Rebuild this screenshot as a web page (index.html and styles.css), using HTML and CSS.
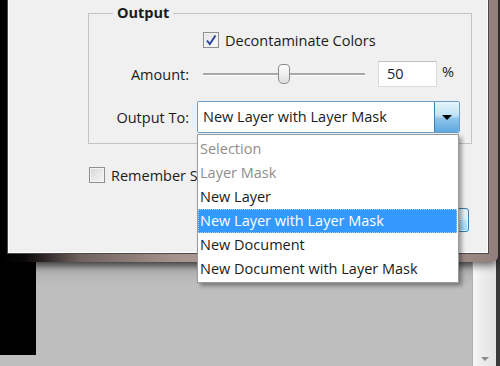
FILE: index.html
```html
<!DOCTYPE html>
<html lang="en">
<head>
  <meta charset="UTF-8">
  <title>Refine Mask - Output</title>
  <link rel="stylesheet" href="styles.css">
</head>
<body>

  <div class="desktop">
    <div class="dark-panel"></div>
    <div class="canvas"></div>
    <div class="scrollbar"><span class="scroll-arrow"></span></div>
  </div>

  <div class="window">
    <div class="client">
      <fieldset class="group">
        <legend>Output</legend>

        <div class="row row-check">
          <span class="label"></span>
          <label class="check">
            <span class="box checked">
              <svg width="12" height="12" viewBox="0 0 12 12"><path d="M2 6.5 L4.8 10 L10.5 1.5" fill="none" stroke="#33489a" stroke-width="2"/></svg>
            </span>
            Decontaminate Colors
          </label>
        </div>

        <div class="row row-amount">
          <span class="label">Amount:</span>
          <div class="amount">
            <div class="slider"><span class="thumb"></span></div>
            <div class="field">50</div>
            <span class="unit">%</span>
          </div>
        </div>

        <div class="row row-output">
          <span class="label">Output To:</span>
          <div class="select">
            <span class="select-value">New Layer with Layer Mask</span>
            <span class="select-btn"><span class="tri"></span></span>
          </div>
        </div>
      </fieldset>

      <label class="check remember">
        <span class="box"></span>
        <span class="remember-text">Remember Settings</span>
      </label>

      <div class="btn-row">
        <button class="btn-ok">OK</button>
      </div>
    </div>
  </div>

  <ul class="dropdown">
    <li class="disabled">Selection</li>
    <li class="disabled">Layer Mask</li>
    <li>New Layer</li>
    <li class="active">New Layer with Layer Mask</li>
    <li>New Document</li>
    <li>New Document with Layer Mask</li>
  </ul>

</body>
</html>
```

FILE: styles.css
```css
body {
  margin: 0;
  width: 500px;
  height: 366px;
  overflow: hidden;
  position: relative;
  font-family: "Open Sans", "Noto Sans", sans-serif;
  font-size: 14.5px;
  color: #1b1b1b;
  background: #bebebe;
}
.desktop {
  display: flex;
  height: 366px;
}
.dark-panel {
  width: 36px;
  height: 355px;
  background: #000;
}
.canvas {
  flex: 1;
  background: linear-gradient(#8c8c8c 262px, #b0b0b0 270px, #bebebe 285px);
}
.scrollbar {
  width: 23px;
  border-left: 1px solid #b0b0b0;
  border-right: 4px solid #3a3a3a;
  background: linear-gradient(to right, #f8f8f8, #ececec 40%, #e4e4e4);
  position: relative;
}
.scroll-arrow {
  position: absolute;
  left: 8px;
  bottom: 5px;
  border-left: 4px solid transparent;
  border-right: 4px solid transparent;
  border-top: 4px solid #8a8a8a;
}

/* dialog window */
.window {
  position: absolute;
  left: 0;
  top: -12px;
  width: 498px;
  height: 274px;
  border-radius: 0 0 6px 6px;
  background: linear-gradient(to right, #000 0, #0a0808 25px, #6f625f 80px, #a8948f 180px, #b3a29e 380px, #927f7b 100%);
  box-shadow: 0 3px 8px rgba(0, 0, 0, 0.6);
}
.client {
  margin: 12px 10px 0 8px;
  height: 253px;
  box-sizing: border-box;
  padding: 4px 16px 0 80px;
  background: #f0f0f0;
  border: 1px solid #fdfdfd;
  border-top: none;
  box-shadow: 0 0 0 1px #4a4a4a;
}
.group {
  margin: 0 0 0 -1px;
  padding: 0 0 10px 0;
  border: 1px solid #c3c3c3;
  width: 384px;
  box-sizing: border-box;
}
.group legend {
  margin-left: 24px;
  padding: 0 4px;
  font-weight: bold;
  line-height: 18px;
}
.row {
  display: flex;
  align-items: center;
  gap: 8px;
}
.row .label {
  width: 100px;
  text-align: right;
}
.row-check {
  margin-top: 6px;
  height: 24px;
}
.row-amount {
  margin-top: 8px;
  height: 28px;
}
.row-output {
  margin-top: 13px;
  height: 32px;
}

.check {
  display: flex;
  align-items: center;
  gap: 6px;
}
.row-check .check {
  margin-left: 6px;
}
.box {
  flex: none;
  width: 14px;
  height: 14px;
  border: 1px solid #8e8f8f;
  background: linear-gradient(135deg, #d8d8d8, #f6f6f6);
  box-shadow: inset 0 0 0 1px #f4f4f4;
  display: flex;
  align-items: center;
  justify-content: center;
}
.box.checked {
  background: linear-gradient(135deg, #e2e2e2, #fbfbfb);
}

.amount {
  display: flex;
  align-items: center;
  margin-left: 6px;
}
.slider {
  position: relative;
  width: 162px;
  height: 2px;
  background: #a8a8a8;
  border-bottom: 1px solid #fff;
}
.thumb {
  position: absolute;
  left: 75px;
  top: -9px;
  width: 10px;
  height: 18px;
  border: 1px solid #8c8c8c;
  border-radius: 4px 4px 5px 5px;
  background: linear-gradient(#fdfdfd, #dedede);
}
.field {
  margin-left: 13px;
  width: 59px;
  height: 26px;
  box-sizing: border-box;
  padding-left: 8px;
  line-height: 24px;
  background: #fff;
  border: 1px solid #dadada;
  border-top-color: #c2c2c2;
}
.unit {
  margin-left: 5px;
  margin-top: -6px;
}

.select {
  width: 263px;
  height: 32px;
  box-sizing: border-box;
  display: flex;
  align-items: stretch;
  background: #fff;
  border: 1px solid #6c9ec8;
  border-radius: 2px;
}
.select-value {
  flex: 1;
  padding-left: 5px;
  line-height: 30px;
}
.select-btn {
  width: 24px;
  border-left: 1px solid #3c7fb1;
  border-radius: 0 2px 2px 0;
  background: linear-gradient(#e6f4fc 0, #bfe2f8 45%, #8dc4ec 55%, #5ea8df 100%);
  display: flex;
  align-items: center;
  justify-content: center;
}
.tri {
  border-left: 5px solid transparent;
  border-right: 5px solid transparent;
  border-top: 5px solid #000;
}

.remember {
  margin-top: 23px;
  height: 16px;
}
.remember-text {
  white-space: nowrap;
}
.btn-row {
  display: flex;
  justify-content: flex-end;
  margin-top: 25px;
  margin-right: 2px;
}
.btn-ok {
  width: 75px;
  height: 24px;
  font: inherit;
  border: 1px solid #3c7fb1;
  border-radius: 3px;
  background: linear-gradient(#eaf6fd, #d9f0fc 50%, #bee6fd 51%, #a7d9f5);
  box-shadow: inset 0 0 0 1px #e6f3fb;
}

/* open list of the select */
.dropdown {
  position: absolute;
  left: 197px;
  top: 134px;
  width: 262px;
  margin: 0;
  padding: 2px 0 1px;
  box-sizing: border-box;
  list-style: none;
  background: #fff;
  border: 1px solid #9a9a9a;
  box-shadow: 3px 3px 4px rgba(0, 0, 0, 0.35);
}
.dropdown li {
  height: 24px;
  line-height: 24px;
  padding-left: 2px;
  box-sizing: border-box;
}
.dropdown li.disabled {
  color: #8e8e8e;
}
.dropdown li.active {
  margin-right: 1px;
  background: #3399ff;
  color: #fff;
  border: 1px dotted #a8d0f7;
  line-height: 22px;
  padding-left: 1px;
}
```
